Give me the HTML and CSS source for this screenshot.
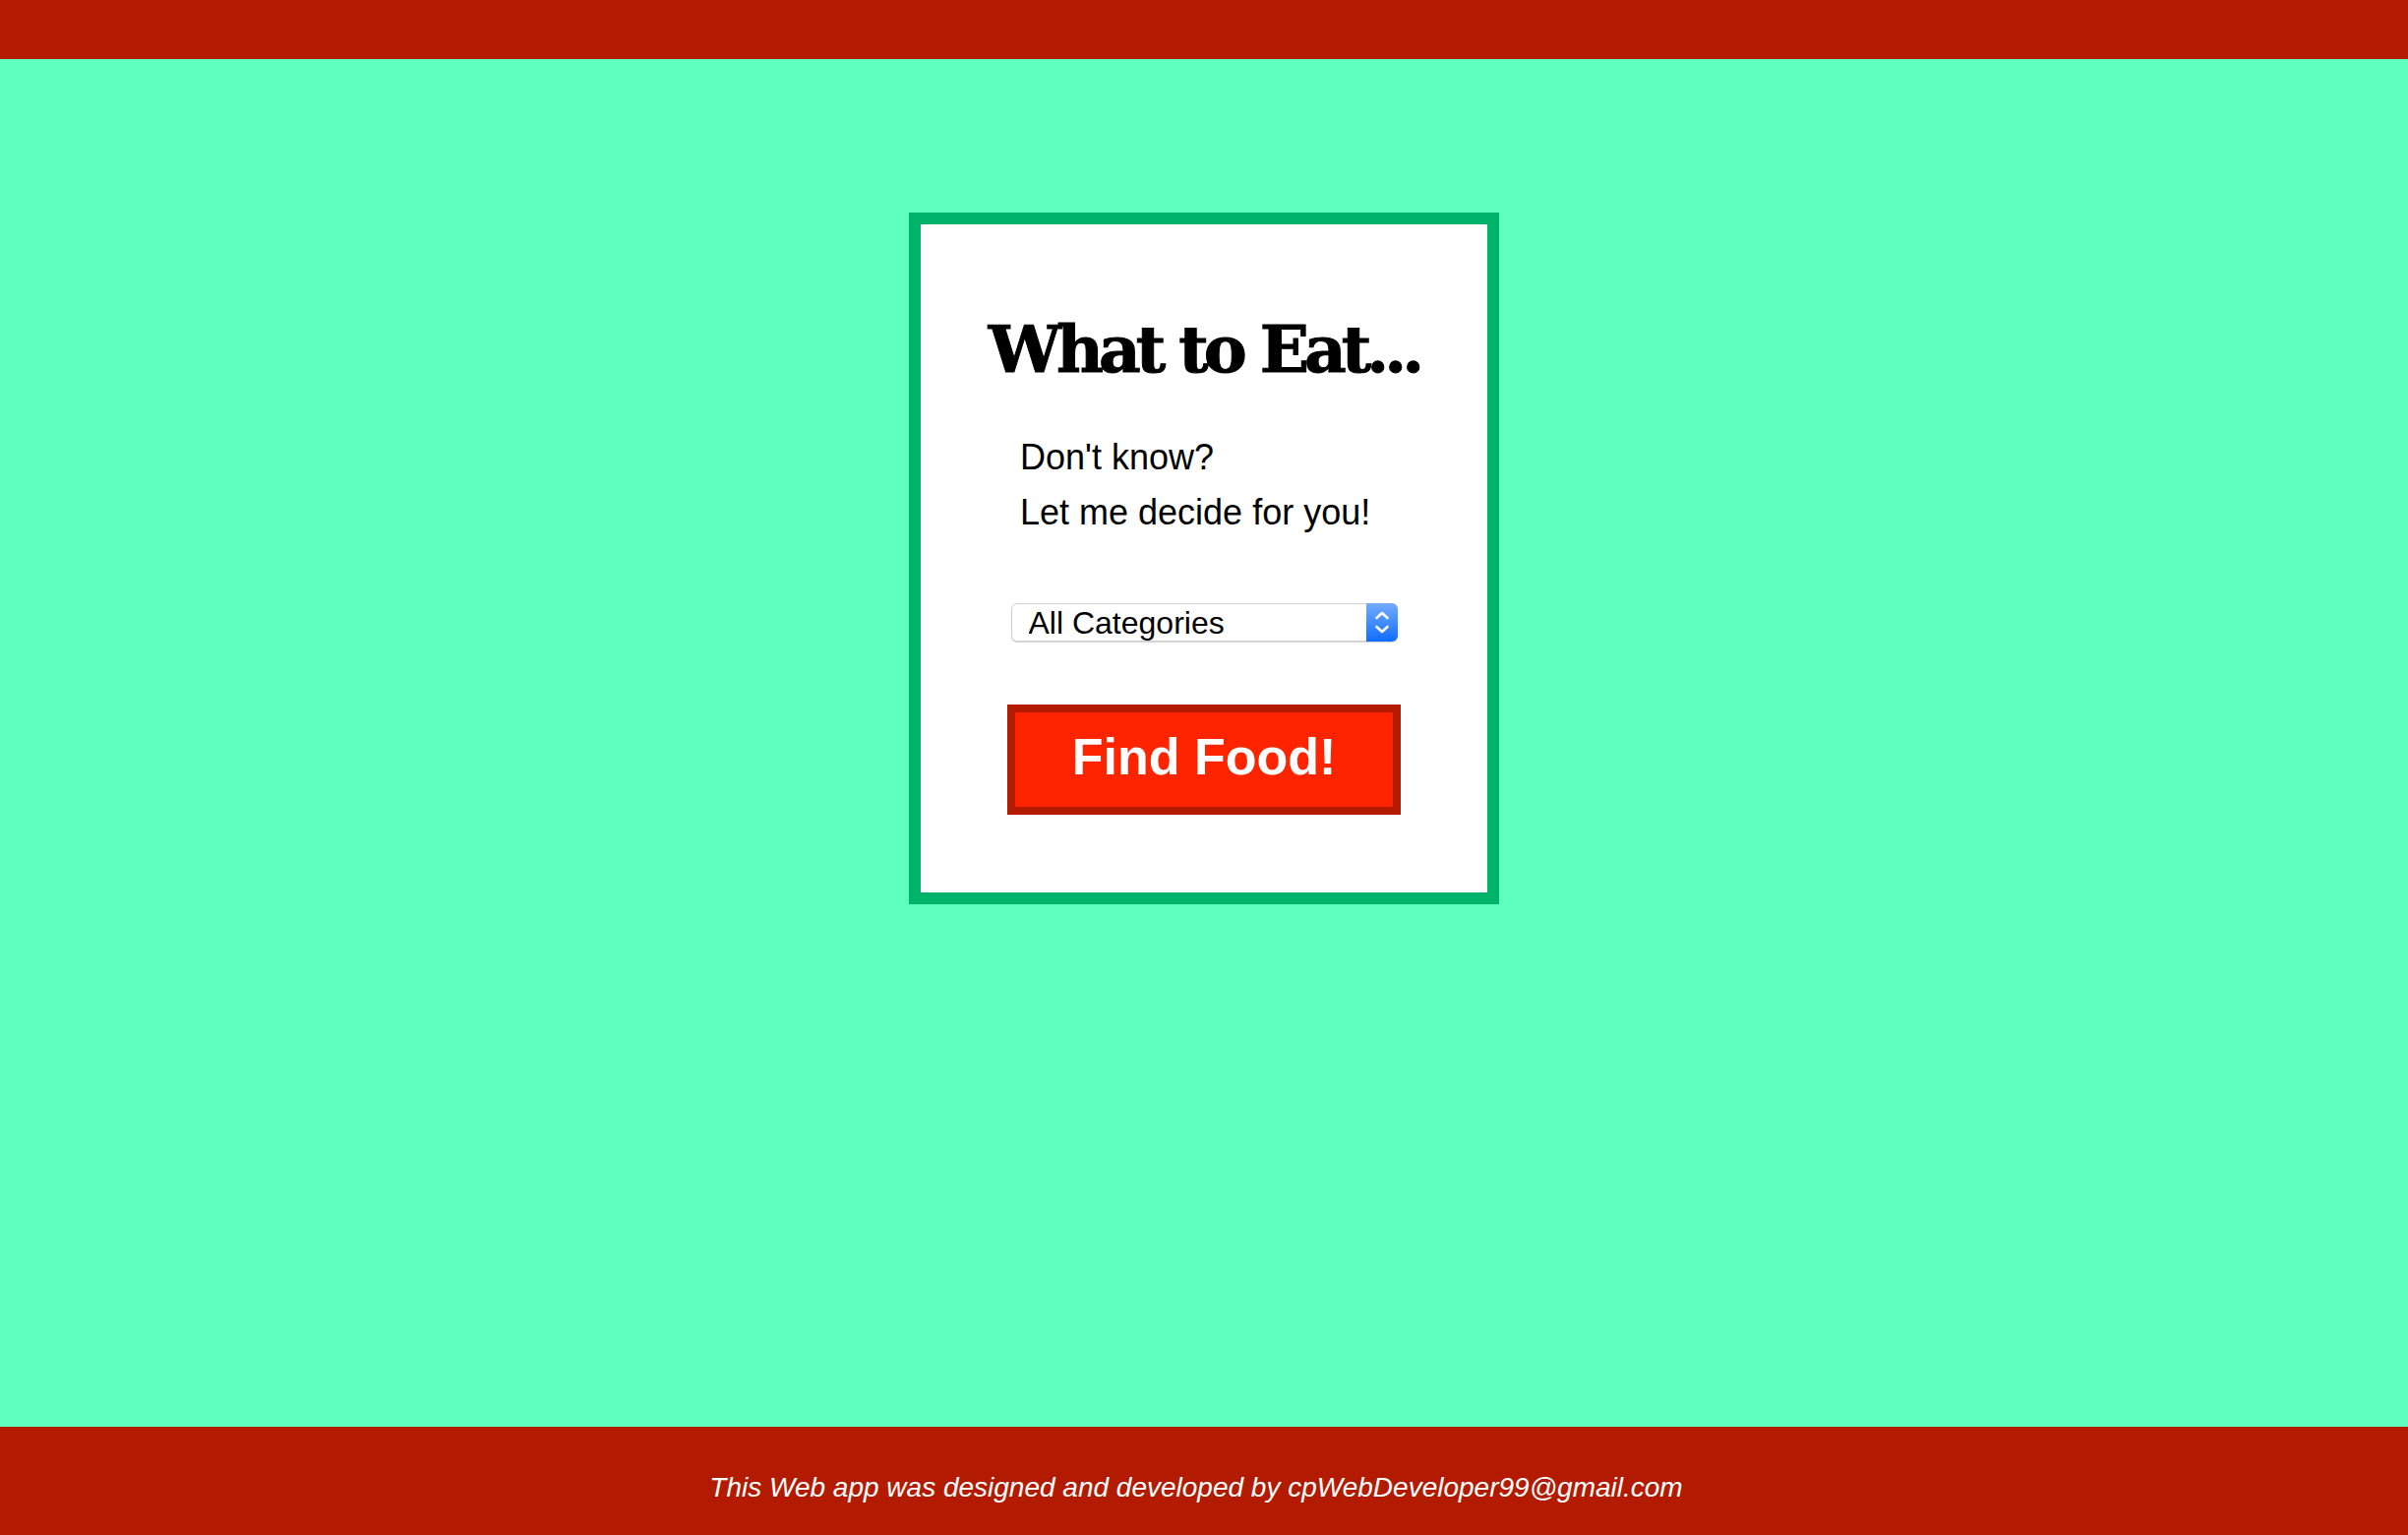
FILE: index.html
```html
<!DOCTYPE html>
<html lang="en">
<head>
<meta charset="utf-8">
<title>What to Eat</title>
<link rel="stylesheet" href="styles.css">
</head>
<body>
<header class="topbar"></header>
<main class="main">
  <section class="card">
    <h1 class="title">What to Eat...</h1>
    <div class="intro">
      <p class="line">Don't know?</p>
      <p class="line">Let me decide for you!</p>
    </div>
    <div class="select-wrap">
      <select class="category">
        <option>All Categories</option>
        <option>Pizza</option>
        <option>Burgers</option>
        <option>Sushi</option>
      </select>
      <span class="select-arrow">
        <svg width="32" height="37" viewBox="0 0 32 37" aria-hidden="true">
          <polyline points="10.5,14 16,9 21.5,14" fill="none" stroke="#fff" stroke-width="2.6" stroke-linecap="round" stroke-linejoin="round"/>
          <polyline points="10.5,23 16,28 21.5,23" fill="none" stroke="#fff" stroke-width="2.6" stroke-linecap="round" stroke-linejoin="round"/>
        </svg>
      </span>
    </div>
    <button class="find">Find Food!</button>
  </section>
</main>
<footer class="footer">
  <p class="credit">This Web app was designed and developed by cpWebDeveloper99@gmail.com</p>
</footer>
</body>
</html>
```

FILE: styles.css
```css
html, body {
  margin: 0;
  padding: 0;
}

body {
  background: #5effbd;
  min-height: 100vh;
  display: flex;
  flex-direction: column;
  font-family: "Liberation Sans", Arial, sans-serif;
}

.topbar {
  height: 60px;
  background: #b31b00;
  flex: none;
}

.main {
  flex: 1;
  display: flex;
  justify-content: center;
  align-items: flex-start;
  padding-top: 156px;
}

.card {
  box-sizing: border-box;
  width: 600px;
  background: #fff;
  border: 12px solid #00b36b;
  padding: 87px 0 79px;
  display: flex;
  flex-direction: column;
}

.title {
  margin: 0;
  text-align: center;
  font-family: "DejaVu Serif", serif;
  font-weight: bold;
  font-size: 66px;
  letter-spacing: -5px;
  line-height: 80px;
  color: #000;
  -webkit-text-stroke: 1px #000;
}

.intro {
  margin: 42px 0 0 101px;
}

.line {
  margin: 0;
  font-size: 36px;
  line-height: 56px;
  color: #000;
}

.select-wrap {
  position: relative;
  width: 393px;
  height: 39px;
  margin: 64px auto 0;
}

.category {
  -webkit-appearance: none;
  appearance: none;
  box-sizing: border-box;
  width: 100%;
  height: 39px;
  margin: 0;
  padding: 0 40px 0 17px;
  font-family: "Liberation Sans", Arial, sans-serif;
  font-size: 32px;
  color: #000;
  background: #fff;
  border: 1px solid #d0d0d0;
  border-radius: 6px;
  box-shadow: 0 1px 1px rgba(0, 0, 0, 0.18);
  outline: none;
}

.select-arrow {
  position: absolute;
  top: 0;
  right: 0;
  width: 32px;
  height: 39px;
  border-radius: 0 6px 6px 0;
  background: linear-gradient(#74acff, #0f6dff);
  display: flex;
  align-items: center;
  justify-content: center;
  pointer-events: none;
}

.find {
  box-sizing: border-box;
  width: 400px;
  height: 112px;
  margin: 64px auto 0;
  padding: 0 0 6px;
  background: #ff2400;
  border: 8px solid #b31b00;
  color: #fff;
  font-family: "Liberation Sans", Arial, sans-serif;
  font-weight: bold;
  font-size: 52px;
  cursor: pointer;
}

.footer {
  flex: none;
  height: 110px;
  box-sizing: border-box;
  background: #b31b00;
  padding: 46px 16px 0 0;
}

.credit {
  margin: 0;
  text-align: center;
  color: #fff;
  font-style: italic;
  font-size: 28px;
  line-height: 32px;
}
```
